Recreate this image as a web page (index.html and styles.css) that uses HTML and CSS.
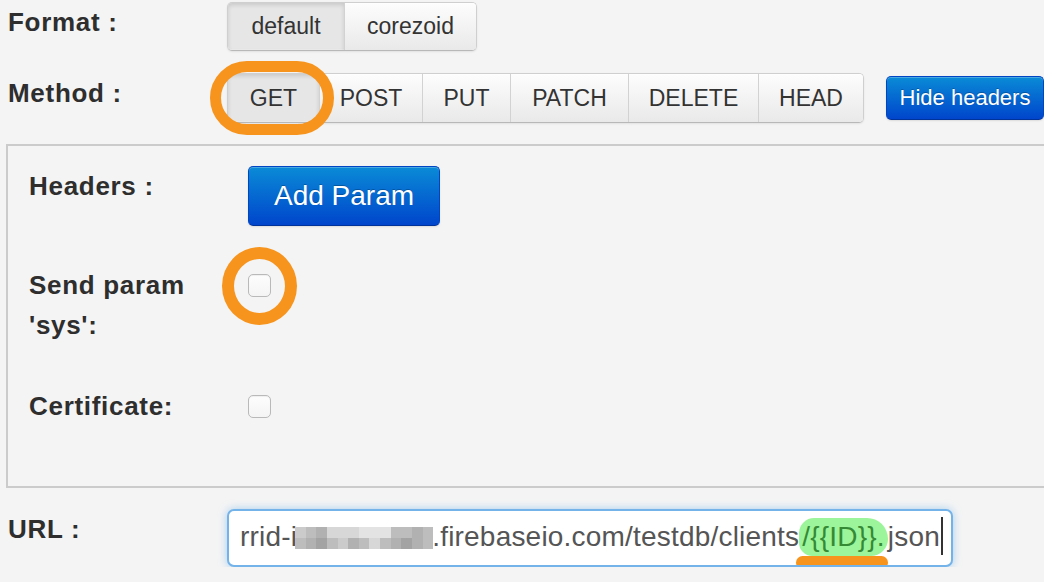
FILE: index.html
```html
<!DOCTYPE html>
<html>
<head>
<meta charset="utf-8">
<title>Request settings</title>
<link rel="stylesheet" href="styles.css">
</head>
<body>
<div class="page">
  <div class="row row-format">
    <div class="label">Format :</div>
    <div class="btn-group group-format">
      <button class="btn active w-default">default</button>
      <button class="btn w-corezoid">corezoid</button>
    </div>
  </div>

  <div class="row row-method">
    <div class="label">Method :</div>
    <div class="btn-group group-method">
      <button class="btn active w-get">GET</button>
      <button class="btn w-post">POST</button>
      <button class="btn w-put">PUT</button>
      <button class="btn w-patch">PATCH</button>
      <button class="btn w-delete">DELETE</button>
      <button class="btn w-head">HEAD</button>
      <span class="ring ring-get"></span>
    </div>
    <button class="btn-primary btn-hide">Hide headers</button>
  </div>

  <div class="panel">
    <div class="row prow-headers">
      <div class="label">Headers :</div>
      <button class="btn-primary btn-add">Add Param</button>
    </div>
    <div class="row prow-sys">
      <div class="label">Send param<br>'sys':</div>
      <span class="check-wrap">
        <span class="checkbox"></span>
        <span class="ring ring-check"></span>
      </span>
    </div>
    <div class="row prow-cert">
      <div class="label">Certificate:</div>
      <span class="check-wrap">
        <span class="checkbox"></span>
      </span>
    </div>
  </div>

  <div class="row row-url">
    <div class="label">URL :</div>
    <div class="url-input">rrid-i<span class="blur"><span class="c3"></span><span class="c4"></span><span class="c5"></span><span class="c2"></span><span class="c2"></span><span class="c2"></span><span class="c1"></span><span class="c1"></span><span class="c1"></span><span class="c4"></span><span class="c4"></span><span class="c5"></span><span class="c4"></span><span class="c4"></span><span class="c5"></span><span class="c6"></span><span class="c4"></span><span class="c3"></span><span class="c5"></span><span class="c4"></span><span class="c2"></span><span class="c4"></span><span class="c5"></span><span class="c6"></span><span class="c5"></span><span class="c4"></span></span>.firebaseio.com/testdb/clients<span class="hl">/{{ID}}.<span class="underline"></span></span>json<span class="caret"></span></div>
  </div>
</div>
</body>
</html>
```

FILE: styles.css
```css
html, body {
  margin: 0;
  padding: 0;
  background: #f4f4f4;
  overflow: hidden;
}

body {
  font-family: "Liberation Sans", Arial, Helvetica, sans-serif;
  color: #333;
}

.page {
  padding: 2px 0 0 8px;
}

.row {
  display: flex;
  align-items: flex-start;
}

.label {
  flex: 0 0 219px;
  font-size: 26px;
  font-weight: bold;
  letter-spacing: 0.7px;
  line-height: 40px;
  color: #2e2e2e;
}

/* button groups */
.btn-group {
  position: relative;
  display: flex;
  border: 1px solid #cfcfcf;
  border-bottom-color: #b8b8b8;
  border-radius: 5px;
  box-shadow: 0 1px 2px rgba(0, 0, 0, 0.08);
  box-sizing: border-box;
}

.group-format { height: 49px; }
.group-method { height: 50px; }

.btn {
  font-family: "Liberation Sans", Arial, Helvetica, sans-serif;
  font-size: 23px;
  color: #333;
  margin: 0;
  padding: 0;
  border: 0;
  border-left: 1px solid #d2d2d2;
  background: linear-gradient(to bottom, #fdfdfd, #e9e9e9);
  box-shadow: inset 0 1px 0 rgba(255, 255, 255, 0.6);
  text-align: center;
}

.btn:first-of-type {
  border-left: 0;
  border-radius: 4px 0 0 4px;
}

.btn:last-of-type {
  border-radius: 0 4px 4px 0;
}

.btn.active {
  background: #e6e6e6;
  box-shadow: inset 0 2px 4px rgba(0, 0, 0, 0.13), inset 0 -1px 0 rgba(255,255,255,0.3);
}

.w-default { width: 116px; }
.w-corezoid { width: 132px; }
.w-get { width: 91px; }
.w-post { width: 103px; }
.w-put { width: 88px; }
.w-patch { width: 118px; }
.w-delete { width: 130px; }
.w-head { width: 105px; }

.row-method {
  margin-top: 22px;
}

/* primary buttons */
.btn-primary {
  font-family: "Liberation Sans", Arial, Helvetica, sans-serif;
  color: #fff;
  margin: 0;
  padding: 0;
  border: 1px solid #0045c4;
  border-bottom-color: #003399;
  border-radius: 5px;
  background: linear-gradient(to bottom, #0a8bd6, #0045cc);
  box-shadow: inset 0 1px 0 rgba(255, 255, 255, 0.25), 0 1px 2px rgba(0, 0, 0, 0.1);
  text-shadow: 0 -1px 0 rgba(0, 0, 0, 0.25);
  text-align: center;
  box-sizing: border-box;
}

.btn-hide {
  align-self: center;
  margin-left: 22px;
  width: 158px;
  height: 44px;
  font-size: 22px;
  flex: 0 0 auto;
}

.btn-add {
  width: 192px;
  height: 60px;
  font-size: 28px;
}

/* panel */
.panel {
  margin: 21px -60px 0 -2px;
  border: 2px solid #cbcbcb;
  background: #f4f4f4;
  padding: 20px 0 60px 21px;
}

.prow-sys {
  margin-top: 39px;
}

.prow-cert {
  margin-top: 41px;
}

.check-wrap {
  position: relative;
  display: block;
  width: 23px;
  height: 23px;
  margin-top: 9px;
}

.checkbox {
  display: block;
  width: 23px;
  height: 23px;
  box-sizing: border-box;
  border: 1px solid #b9b9b9;
  border-radius: 5px;
  background: linear-gradient(to bottom, #fdfdfd, #f4f4f4);
  box-shadow: inset 0 1px 1px rgba(0, 0, 0, 0.06);
}

/* annotations */
.ring {
  position: absolute;
  box-sizing: border-box;
  border-style: solid;
  border-color: #f7941d;
  pointer-events: none;
}

.ring-get {
  left: -18px;
  top: -13px;
  width: 124px;
  height: 74px;
  border-width: 11px;
  border-radius: 37px;
}

.ring-check {
  left: -26px;
  top: -27px;
  width: 75px;
  height: 78px;
  border-width: 12px;
  border-radius: 50%;
}

/* URL */
.row-url {
  margin-top: 21px;
}

.url-input {
  width: 726px;
  height: 58px;
  box-sizing: border-box;
  border: 2px solid #74b3ea;
  border-radius: 7px;
  background: #fff;
  box-shadow: 0 0 9px rgba(102, 175, 233, 0.55);
  padding: 6px 0 0 11px;
  font-size: 28px;
  letter-spacing: 0.2px;
  line-height: 38px;
  color: #555;
  white-space: nowrap;
  overflow: hidden;
}

.blur {
  display: inline-grid;
  grid-template-columns: repeat(13, 1fr);
  grid-template-rows: 11px 11px;
  width: 138px;
  height: 22px;
  vertical-align: 8px;
  margin: 0 -1px 0 -2px;
}

.blur .c1 { background: #e3e3e3; }
.blur .c2 { background: #d7d7d7; }
.blur .c3 { background: #cbcbcb; }
.blur .c4 { background: #bdbdbd; }
.blur .c5 { background: #b1b1b1; }
.blur .c6 { background: #a3a3a3; }

.hl {
  position: relative;
  display: inline-block;
  background: #9df59b;
  color: #358a35;
  border-radius: 16px 22px 18px 14px;
  padding: 0 3px 0 3px;
}

.underline {
  position: absolute;
  left: -3px;
  top: 38px;
  width: 92px;
  height: 13px;
  border-radius: 7px;
  background: #f7941d;
}

.caret {
  display: inline-block;
  width: 2px;
  height: 38px;
  background: #333;
  vertical-align: -9px;
  margin-left: 1px;
}
```
